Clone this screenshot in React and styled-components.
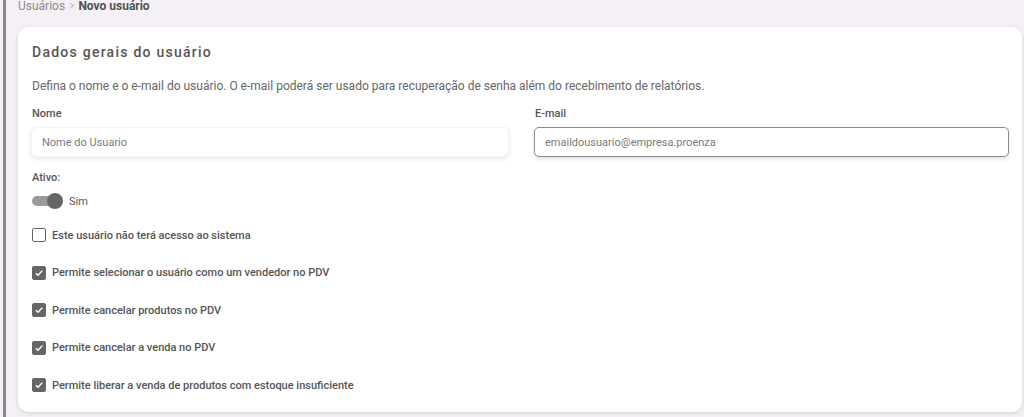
import React from "react";
import styled, { createGlobalStyle } from "styled-components";

const Global = createGlobalStyle`
  html, body { margin: 0; padding: 0; background: #f5f0f6; }
  body { font-family: Roboto, "Noto Sans", Arial, sans-serif; overflow: hidden; }
`;

const Page = styled.div`
  display: flex;
  height: 417px;
  background: #f5f0f6;
`;

const SideRule = styled.div`
  width: 3px;
  margin-left: 3px;
  background: #8a8a8a;
  flex: none;
`;

const Main = styled.div`
  flex: 1;
  padding: 0 2px 0 12px;
  display: flex;
  flex-direction: column;
`;

const Breadcrumb = styled.div`
  font-size: 12px;
  line-height: 16px;
  margin-top: -2px;
  height: 16px;
  color: #8a8a8a;
  display: flex;
  gap: 4px;
  align-items: center;
`;

const Sep = styled.span`
  color: #b5b5b5;
  font-size: 10px;
`;

const Current = styled.span`
  color: #505050;
  font-weight: 700;
`;

const Card = styled.div`
  margin-top: 13px;
  background: #fff;
  border-radius: 10px;
  box-shadow: 0 1px 4px rgba(60, 40, 70, 0.18);
  padding: 16px 13px 0 13px;
  height: 385px;
  box-sizing: border-box;
`;

const Title = styled.h2`
  margin: 0 0 0 1px;
  font-size: 14px;
  line-height: 18px;
  font-weight: 500;
  letter-spacing: 1.25px;
  color: #555;
`;

const Description = styled.p`
  margin: 16px 0 0 1px;
  font-size: 12px;
  line-height: 18px;
  color: #666;
`;

const FieldGrid = styled.div`
  margin-top: 12px;
  display: grid;
  grid-template-columns: 478px 475px;
  column-gap: 25px;
`;

const Field = styled.div`
  display: flex;
  flex-direction: column;
`;

const Label = styled.label`
  font-size: 11px;
  line-height: 14px;
  font-weight: 500;
  color: #555;
  margin: 0 0 6px 1px;
`;

const Input = styled.div`
  height: 30px;
  box-sizing: border-box;
  border-radius: 5px;
  padding: 0 10px;
  display: flex;
  align-items: center;
  font-size: 11px;
  color: #7a7a7a;
  background: #fff;
  border: ${(p) => (p.$focused ? "1px solid #8c8c8c" : "1px solid #f2f2f2")};
  box-shadow: ${(p) =>
    p.$focused ? "0 2px 4px rgba(0,0,0,0.12)" : "0 2px 5px rgba(0,0,0,0.09)"};
`;

const ActiveBlock = styled.div`
  margin-top: 14px;
  display: flex;
  flex-direction: column;
`;

const SwitchRow = styled.div`
  display: flex;
  align-items: center;
  gap: 6px;
  height: 18px;
  margin-top: 1px;
  margin-left: 1px;
`;

const Track = styled.div`
  position: relative;
  width: 28px;
  height: 10px;
  border-radius: 5px;
  background: #9a9a9a;
  margin-right: 3px;
`;

const Thumb = styled.div`
  position: absolute;
  right: -3px;
  top: -3px;
  width: 16px;
  height: 16px;
  border-radius: 50%;
  background: #666;
`;

const SwitchText = styled.span`
  font-size: 11px;
  color: #555;
`;

const Options = styled.div`
  margin-top: 18px;
  display: flex;
  flex-direction: column;
  gap: 23.5px;
`;

const Option = styled.div`
  display: flex;
  align-items: center;
  gap: 6px;
  height: 14px;
  margin-left: 1px;
`;

const Box = styled.div`
  width: 14px;
  height: 14px;
  box-sizing: border-box;
  border-radius: 2px;
  border: 1.5px solid #666;
  background: ${(p) => (p.$checked ? "#666" : "#fff")};
  display: flex;
  align-items: center;
  justify-content: center;
  flex: none;
`;

const OptionText = styled.span`
  font-size: 11px;
  font-weight: 500;
  color: #555;
`;

const options = [
  { text: "Este usuário não terá acesso ao sistema", checked: false },
  { text: "Permite selecionar o usuário como um vendedor no PDV", checked: true },
  { text: "Permite cancelar produtos no PDV", checked: true },
  { text: "Permite cancelar a venda no PDV", checked: true },
  { text: "Permite liberar a venda de produtos com estoque insuficiente", checked: true },
];

export default function App() {
  return (
    <>
      <Global />
      <Page>
        <SideRule />
        <Main>
          <Breadcrumb>
            <span>Usuários</span>
            <Sep>&gt;</Sep>
            <Current>Novo usuário</Current>
          </Breadcrumb>
          <Card>
            <Title>Dados gerais do usuário</Title>
            <Description>
              Defina o nome e o e-mail do usuário. O e-mail poderá ser usado para recuperação de
              senha além do recebimento de relatórios.
            </Description>
            <FieldGrid>
              <Field>
                <Label>Nome</Label>
                <Input>Nome do Usuario</Input>
              </Field>
              <Field>
                <Label>E-mail</Label>
                <Input $focused>emaildousuario@empresa.proenza</Input>
              </Field>
            </FieldGrid>
            <ActiveBlock>
              <Label>Ativo:</Label>
              <SwitchRow>
                <Track>
                  <Thumb />
                </Track>
                <SwitchText>Sim</SwitchText>
              </SwitchRow>
            </ActiveBlock>
            <Options>
              {options.map((o) => (
                <Option key={o.text}>
                  <Box $checked={o.checked}>
                    {o.checked && (
                      <svg width="10" height="10" viewBox="0 0 10 10">
                        <path d="M1.8 5.2 L4 7.3 L8.3 2.6" fill="none" stroke="#fff" strokeWidth="1.4" />
                      </svg>
                    )}
                  </Box>
                  <OptionText>{o.text}</OptionText>
                </Option>
              ))}
            </Options>
          </Card>
        </Main>
      </Page>
    </>
  );
}
